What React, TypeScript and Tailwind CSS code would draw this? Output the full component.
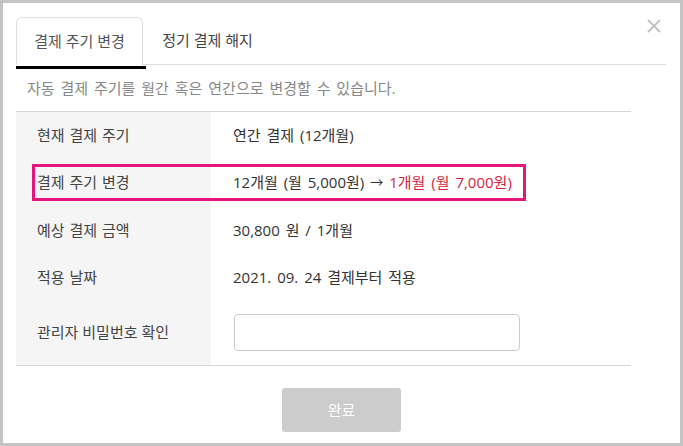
import React from 'react';

const FONT = { fontFamily: '"Open Sans", "Noto Sans CJK KR", sans-serif' };

interface Row {
  label: string;
  h: string;
  value: React.ReactNode;
}

const rows: Row[] = [
  { label: '현재 결제 주기', h: 'h-[46px]', value: '연간 결제 (12개월)' },
  {
    label: '결제 주기 변경',
    h: 'h-[49px]',
    value: (
      <>
        12개월 (월 5,000원)
        <span className="mx-[6px] text-[13px]">→</span>
        <span className="text-[#d51f3d]">1개월 (월 7,000원)</span>
      </>
    ),
  },
  { label: '예상 결제 금액', h: 'h-[47px]', value: '30,800 원 / 1개월' },
  { label: '적용 날짜', h: 'h-[46px]', value: '2021. 09. 24 결제부터 적용' },
];

export default function App() {
  return (
    <div
      style={FONT}
      className="relative w-[683px] h-[446px] border-[3px] border-[#c3c3c3] bg-white text-[15px] text-[#333] overflow-hidden"
    >
      {/* close */}
      <button className="absolute left-[644px] top-[16px] w-[14px] h-[14px]">
        <svg viewBox="0 0 14 14" width="14" height="14">
          <path d="M1 1L13 13M13 1L1 13" stroke="#c4c4c4" strokeWidth="2" />
        </svg>
      </button>

      {/* tabs */}
      <div className="ml-[13px] mr-[14px] mt-[14px] flex border-b border-[#dddddd]">
        <div className="relative w-[127px] h-[48px] -mb-px flex items-center justify-center border border-b-0 border-[#dddddd] rounded-t-[6px] bg-white text-[#555]">
          결제 주기 변경
          <div className="absolute -left-px -bottom-[4px] w-[130px] h-[3px] bg-black" />
        </div>
        <div className="w-[127px] h-[47px] pl-[2px] flex items-center justify-center text-[#444]">정기 결제 해지</div>
      </div>

      <div className="h-[46px] pl-[24px] flex items-center text-[#888] [word-spacing:2px]">
        자동 결제 주기를 월간 혹은 연간으로 변경할 수 있습니다.
      </div>

      {/* table */}
      <div className="ml-[13px] w-[615px] border-y border-[#d6d6d6]">
        {rows.map((r) => (
          <div key={r.label} className={`flex ${r.h}`}>
            <div className="w-[195px] shrink-0 bg-[#f5f5f5] pl-[21px] flex items-center text-[#444] [word-spacing:1px]">{r.label}</div>
            <div className="pl-[22px] flex items-center whitespace-pre [word-spacing:2px]">{r.value}</div>
          </div>
        ))}
        <div className="flex h-[65px]">
          <div className="w-[195px] shrink-0 bg-[#f5f5f5] pl-[21px] flex items-center text-[#444]">관리자 비밀번호 확인</div>
          <div className="pl-[23px] flex items-center">
            <input
              type="password"
              className="w-[286px] h-[37px] border border-[#cccccc] rounded-[4px] outline-none px-2"
            />
          </div>
        </div>
      </div>

      <div className="mt-[22px] flex justify-center">
        <button className="w-[119px] h-[44px] rounded-[3px] bg-[#cccccc] text-white text-[15px]">완료</button>
      </div>

      {/* highlight annotation */}
      <div className="absolute left-[29px] top-[161px] w-[494px] h-[37px] border-[3px] border-[#e6157d] pointer-events-none" />
    </div>
  );
}
